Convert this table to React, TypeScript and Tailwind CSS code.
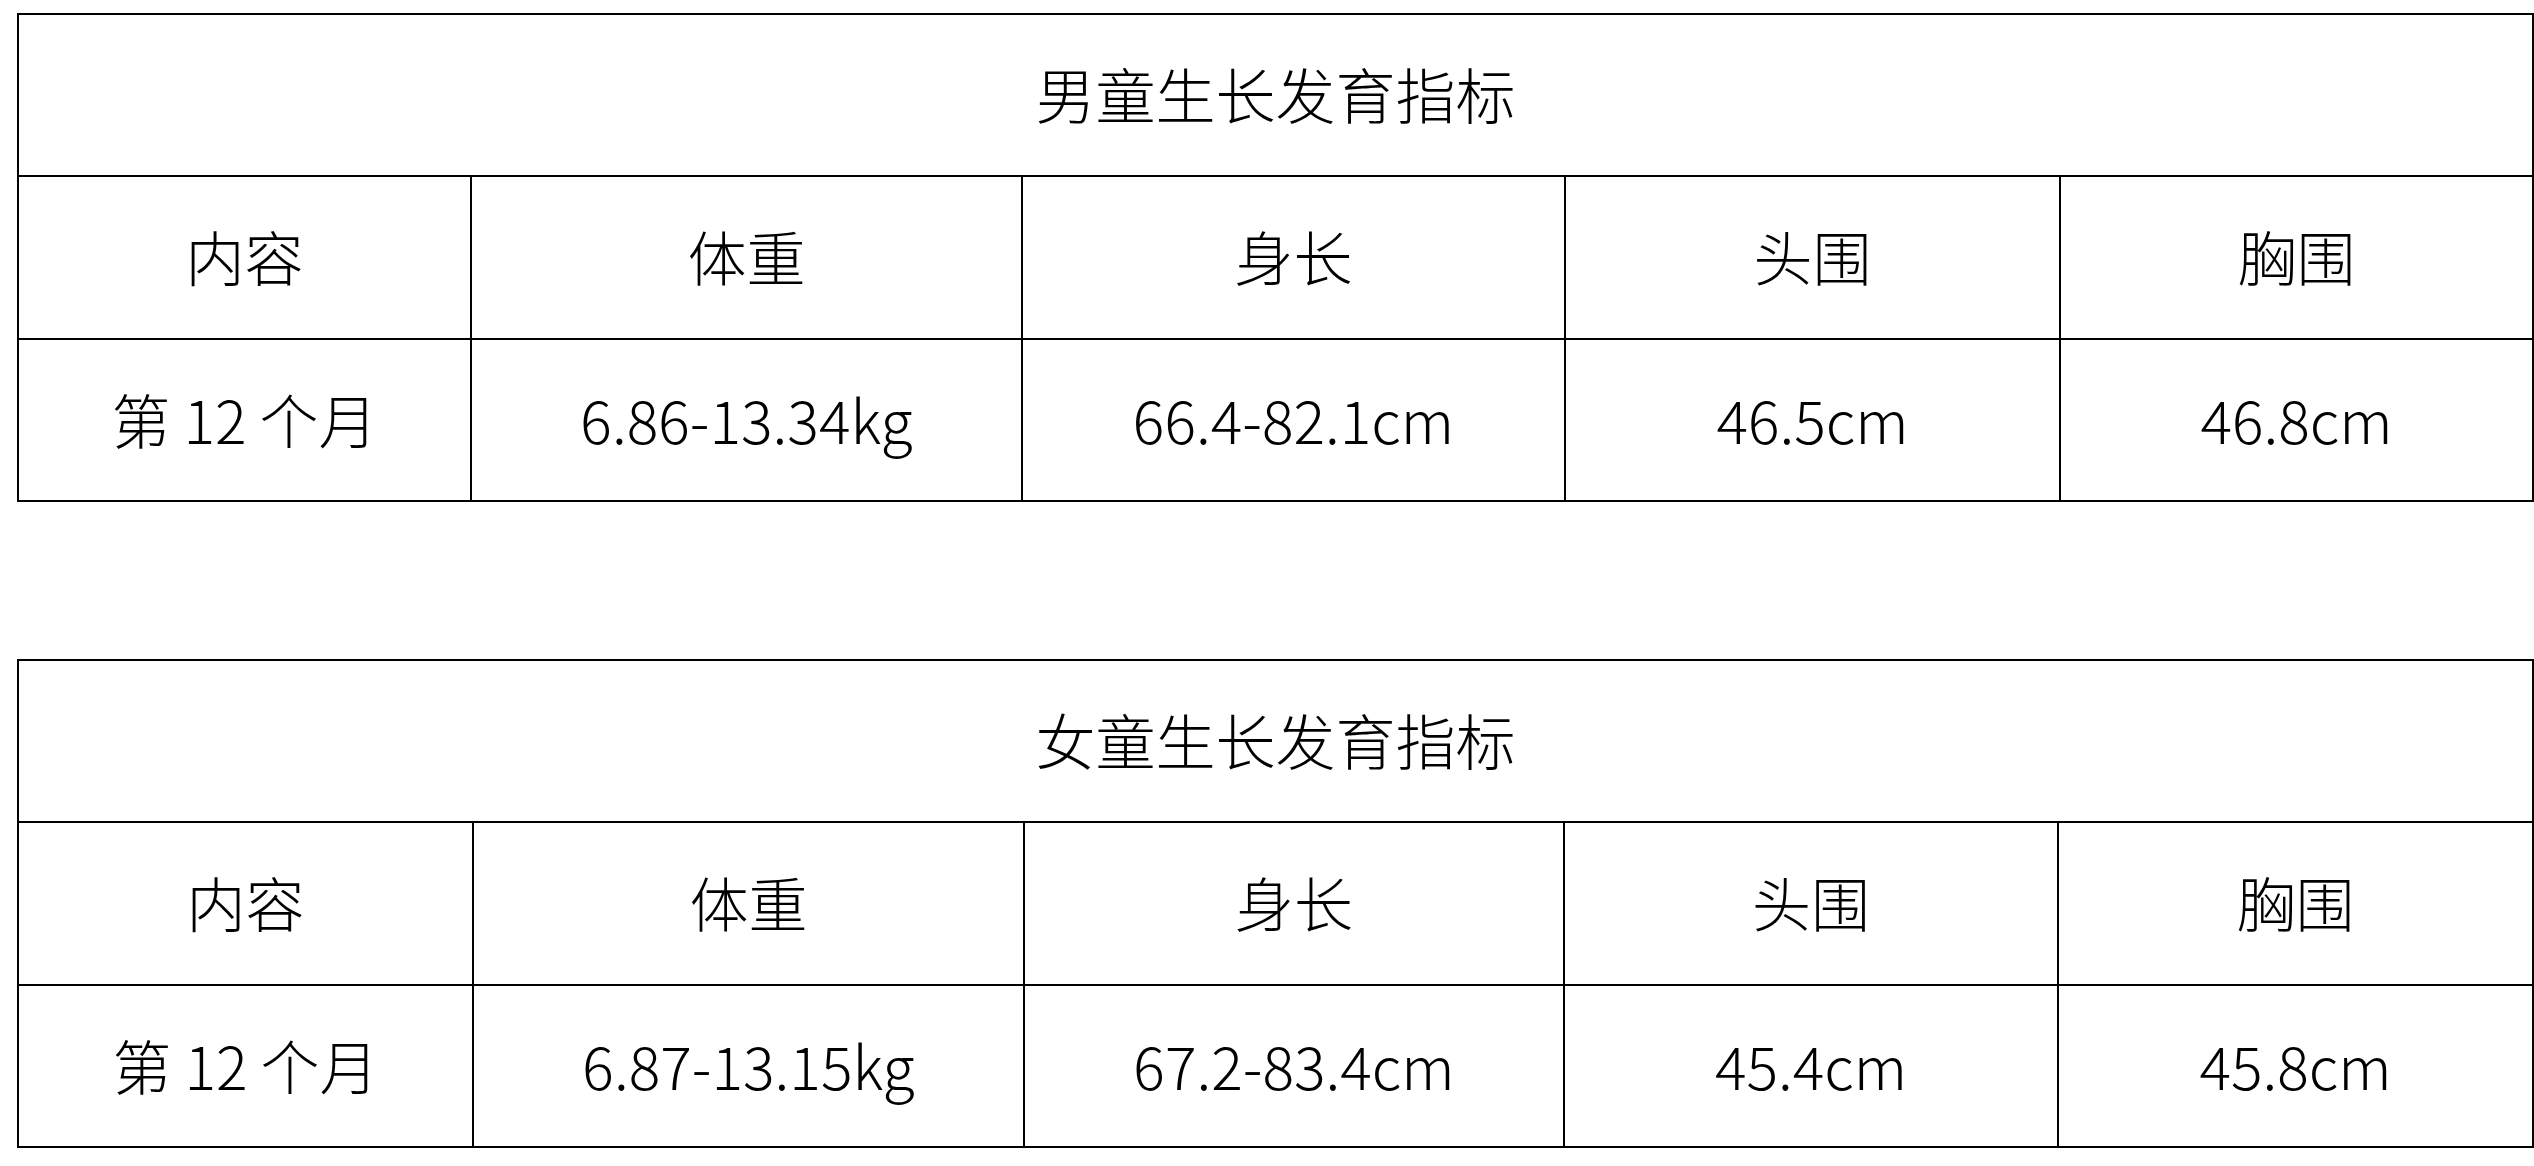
import React from "react";

type Row = { label: string; cells: string[] };

const HEAD = ["内容", "体重", "身长", "头围", "胸围"];

const tables: { title: string; cols: number[]; data: Row }[] = [
  {
    title: "男童生长发育指标",
    cols: [453, 551, 543, 495, 473],
    data: { label: "第 12 个月", cells: ["6.86-13.34kg", "66.4-82.1cm", "46.5cm", "46.8cm"] },
  },
  {
    title: "女童生长发育指标",
    cols: [455, 551, 540, 494, 475],
    data: { label: "第 12 个月", cells: ["6.87-13.15kg", "67.2-83.4cm", "45.4cm", "45.8cm"] },
  },
];

function GrowthTable({ title, cols, data }: { title: string; cols: number[]; data: Row }) {
  return (
    <table className="w-[2515px] table-fixed border-collapse border-2 border-black text-black">
      <colgroup>
        {cols.map((w, i) => (
          <col key={i} style={{ width: w }} />
        ))}
      </colgroup>
      <tbody>
        <tr className="h-[162px]">
          <td colSpan={5} className="border-2 border-black pb-[4px] text-center text-[60px] leading-none">
            {title}
          </td>
        </tr>
        <tr className="h-[163px]">
          {HEAD.map((h) => (
            <td key={h} className="border-2 border-black pb-[4px] text-center text-[59px] leading-none">
              {h}
            </td>
          ))}
        </tr>
        <tr className="h-[162px]">
          <td className="border-2 border-black pb-[4px] text-center text-[59px] leading-none">{data.label}</td>
          {data.cells.map((c) => (
            <td key={c} className="border-2 border-black pb-[4px] text-center text-[59px] leading-none">
              {c}
            </td>
          ))}
        </tr>
      </tbody>
    </table>
  );
}

export default function App() {
  return (
    <div
      className="min-h-screen bg-white pl-[17px] pt-[13px] font-light"
      style={{ fontFamily: '"Noto Sans CJK SC", "Noto Sans", sans-serif' }}
    >
      <div className="flex flex-col gap-[157px]">
        {tables.map((t) => (
          <GrowthTable key={t.title} {...t} />
        ))}
      </div>
    </div>
  );
}
